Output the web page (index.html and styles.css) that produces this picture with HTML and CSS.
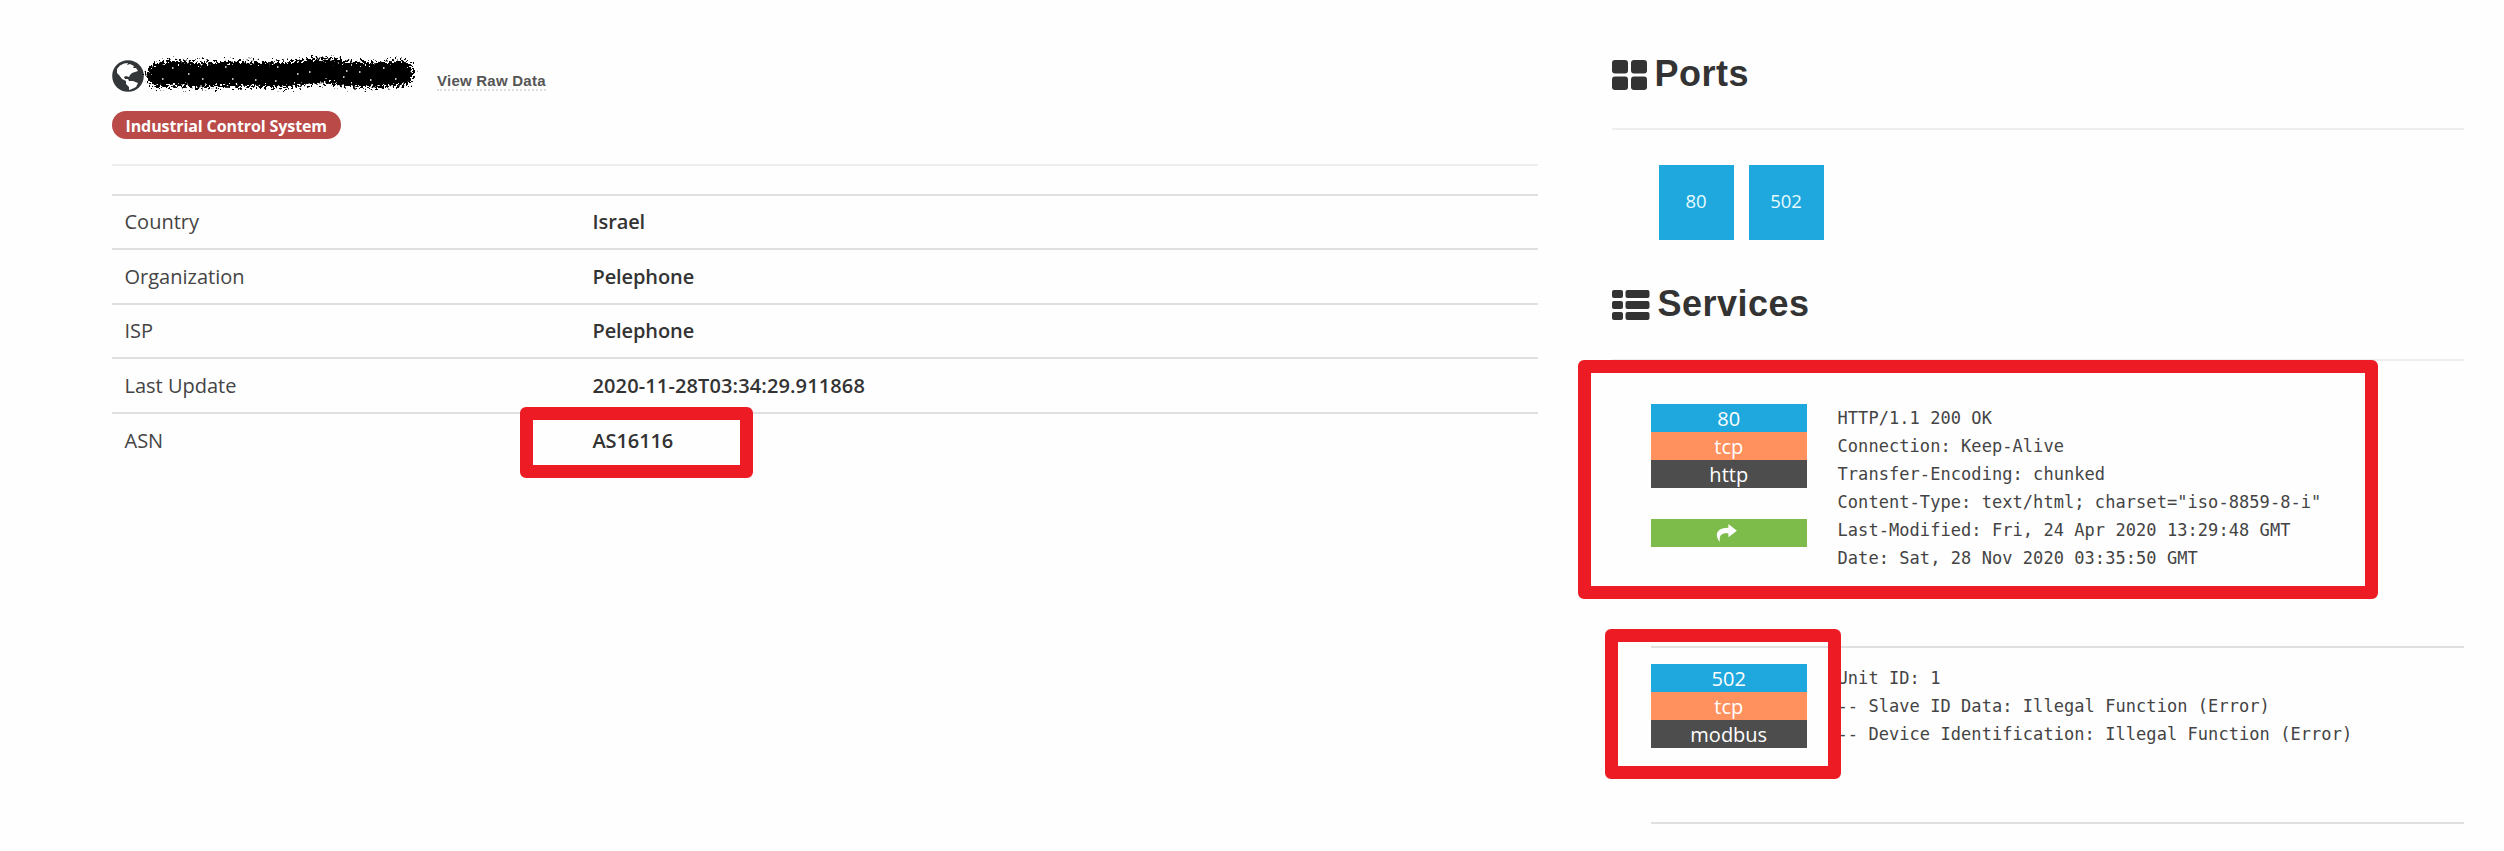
FILE: index.html
```html
<!DOCTYPE html>
<html lang="en">
<head>
<meta charset="utf-8">
<title>Host details</title>
<link rel="stylesheet" href="styles.css">
</head>
<body>
<main class="page">
  <section class="host">
    <header class="host-head">
      <svg class="globe" viewBox="0 0 32 32"><circle cx="16" cy="16" r="15.8" fill="#333638"/><path fill="#fff" d="M5 9L8 5.500L12 3.500L16 3L15 5L18 4L22 6L21 8L24 8L26 11L23 12L20 13L18 15L17 17L14 16L12 17L13 19L16 19L17 21L21 21L26 23L24 27L20 29L17 30L17 27L14 24L14 21L10 19L7 15L5 13Z"/></svg>
      <svg class="scribble" viewBox="0 0 280 42"><defs><filter id="rough" filterUnits="userSpaceOnUse" x="0" y="0" width="280" height="42"><feTurbulence type="fractalNoise" baseFrequency="0.45" numOctaves="2" seed="4"/><feDisplacementMap in="SourceGraphic" scale="17" xChannelSelector="R" yChannelSelector="G"/></filter></defs><path filter="url(#rough)" d="M19 22L30 20L60 22L100 21L145 22L175 18L188 18L210 21L235 22L261 20" fill="none" stroke="#000" stroke-width="25" stroke-linecap="round" stroke-linejoin="round"/><path d="M48 21h1.500M62 26h1.500M22 26h1.500M92 26h1.500M85 14h1.500M115 27h1.500M137 14h1.500M135 28h1.500M157 21h1.500M169 19h1.500M203 24h1.500M206 18h1.500M219 19h1.500M230 27h1.500M243 15h1.500M255 26h1.500M180 30h1.500M32 15h1.500" stroke="#fff" stroke-width="1.500"/></svg>
      <a class="raw">View Raw Data</a>
    </header>
    <div class="tags"><span class="tag"><span class="tag-text">Industrial Control System</span></span></div>
    <table class="facts">
      <tr><td>Country</td><th>Israel</th></tr>
      <tr><td>Organization</td><th>Pelephone</th></tr>
      <tr><td>ISP</td><th>Pelephone</th></tr>
      <tr><td>Last Update</td><th class="stamp">2020-11-28T03:34:29.911868</th></tr>
      <tr><td>ASN</td><th>AS16116</th></tr>
    </table>
  </section>
  <section class="side">
    <h2 class="title title-ports"><svg class="ic-ports" viewBox="0 0 35 30" fill="#333"><rect width="16" height="13.500" rx="3"/><rect x="19" width="16" height="13.500" rx="3"/><rect y="16.500" width="16" height="13.500" rx="3"/><rect x="19" y="16.500" width="16" height="13.500" rx="3"/></svg><span>Ports</span></h2>
    <div class="ports"><span class="port">80</span><span class="port">502</span></div>
    <h2 class="title title-services"><svg class="ic-services" viewBox="0 0 38 30" fill="#333"><rect width="11" height="8" rx="2"/><rect x="13.500" width="24" height="8" rx="2"/><rect y="11" width="11" height="8" rx="2"/><rect x="13.500" y="11" width="24" height="8" rx="2"/><rect y="22" width="11" height="8" rx="2"/><rect x="13.500" y="22" width="24" height="8" rx="2"/></svg><span>Services</span></h2>
    <div class="services">
      <article class="service service-http">
        <div class="labels">
          <span class="label blue">80</span><span class="label orange">tcp</span><span class="label dark">http</span>
          <a class="label go"><svg class="share" viewBox="0 0 22 19"><path fill="#fff" d="M13 0L22 7L13 14V10C6 9 3 12 4 19C-2 12 0 4 13 4Z"/></svg></a>
        </div>
<pre class="banner">HTTP/1.1 200 OK
Connection: Keep-Alive
Transfer-Encoding: chunked
Content-Type: text/html; charset="iso-8859-8-i"
Last-Modified: Fri, 24 Apr 2020 13:29:48 GMT
Date: Sat, 28 Nov 2020 03:35:50 GMT</pre>
      </article>
      <article class="service service-modbus">
        <div class="labels">
          <span class="label blue">502</span><span class="label orange">tcp</span><span class="label dark">modbus</span>
        </div>
<pre class="banner">Unit ID: 1
-- Slave ID Data: Illegal Function (Error)
-- Device Identification: Illegal Function (Error)</pre>
      </article>
    </div>
  </section>
  <div class="mark mark-asn"></div>
  <div class="mark mark-http"></div>
  <div class="mark mark-modbus"></div>
</main>
</body>
</html>
```

FILE: styles.css
```css
* { box-sizing: border-box; }
body { margin: 0; background: #fefefe; color: #333; font-family: "Open Sans", sans-serif; }
.page { position: relative; display: flex; width: 2504px; height: 851px; overflow: hidden; }
.host { width: 1426px; margin-left: 111.5px; }
.side { width: 852.500px; margin-left: 74px; }

.host-head { display: flex; height: 96px; padding-top: 60px; }
.globe { display: block; width: 32px; height: 32px; }
.scribble { display: block; width: 280px; height: 42px; margin: -7px 0 0 -4px; }
.raw { height: 31px; margin-left: 17.500px; padding-top: 11px; font: bold 15px/20px "Liberation Sans", Arial, sans-serif; letter-spacing: .24px; color: #555; border-bottom: 2px dotted #ddd; }
.tags { display: flex; height: 70px; padding-top: 15px; border-bottom: 2px solid #eee; }
.tag { height: 28px; padding: 0 14px; border-radius: 14px; background: #b94a48; color: #fff; font-size: 16px; font-weight: 700; line-height: 30px; letter-spacing: -.1px; white-space: nowrap; }
.facts { width: 100%; margin-top: 27.500px; border-collapse: collapse; table-layout: fixed; font-size: 20px; line-height: 28px; }
.facts td, .facts th { height: 54.500px; padding: 1px 0 0 13px; border-top: 2px solid #e0e0e0; text-align: left; vertical-align: middle; font-weight: 400; }
.facts td { width: 468px; color: #444; }
.facts th { font-weight: 600; letter-spacing: -.1px; }
.facts .stamp { letter-spacing: .12px; }

.title { display: flex; margin: 0; border-bottom: 2px solid #eee; font: bold 36px/42px "Liberation Sans", Arial, sans-serif; letter-spacing: .5px; color: #333; }
.title svg { display: block; flex: none; }
.title-ports { height: 130px; padding-top: 53px; }
.ic-ports { width: 35px; height: 30px; margin: 7px 8px 0 0; }
.title-services { height: 120px; padding-top: 42.500px; }
.ic-services { width: 38px; height: 30px; margin: 7px 8px 0 0; }
.ports { display: flex; gap: 15px; padding: 35px 0 .5px 47px; }
.port { width: 75px; height: 75px; background: #1ea8dd; color: #e8fbff; font-size: 18.500px; line-height: 71px; text-align: center; }
.services { margin-left: 39.500px; }
.service { display: flex; border-bottom: 2px solid #e0e0e0; }
.service-http { height: 287.500px; padding-top: 43px; }
.service-modbus { height: 176px; padding-top: 15.500px; }
.labels { width: 155.500px; }
.label { display: block; height: 28px; color: #fff; font-size: 20px; line-height: 29px; text-align: center; }
.blue { background: #1ea8dd; }
.orange { background: #ff915e; }
.dark { background: #4d4d4d; }
.go { display: flex; justify-content: center; margin-top: 31.500px; padding: 5px 5px 0 0; background: #7dbb4b; }
.share { width: 21px; height: 18px; }
.banner { margin: 0 0 0 31px; font: 17px/28px "DejaVu Sans Mono", monospace; letter-spacing: .06px; color: #444; }

.mark { position: absolute; border: 13px solid #ed1c24; border-radius: 6px; }
.mark-asn { left: 519.500px; top: 407px; width: 233px; height: 70.500px; }
.mark-http { left: 1578px; top: 360px; width: 800px; height: 239px; }
.mark-modbus { left: 1605px; top: 629px; width: 236px; height: 150px; }
```
